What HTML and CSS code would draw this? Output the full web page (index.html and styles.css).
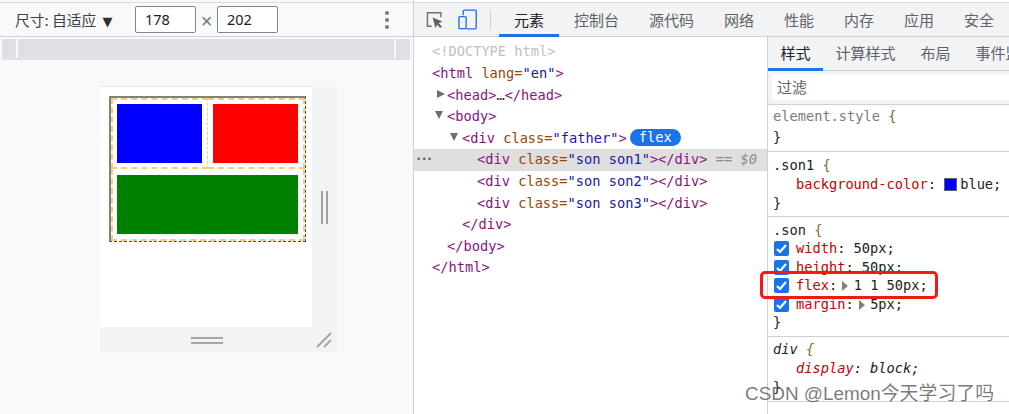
FILE: index.html
```html
<!DOCTYPE html>
<html lang="zh">
<head>
<meta charset="utf-8">
<title>DevTools</title>
<link rel="stylesheet" href="styles.css">
</head>
<body>
<div class="app">
  <section class="left">
    <div class="dev-toolbar">
      <span class="dim-label">尺寸: 自适应<span class="caret">▼</span></span>
      <span class="dim-input first">178</span>
      <span class="times">×</span>
      <span class="dim-input">202</span>
      <span class="kebab"><i></i><i></i><i></i></span>
    </div>
    <div class="ruler"><i></i><i></i></div>
    <div class="stage">
      <div class="device-wrap">
        <div class="device-row">
          <div class="device">
            <div class="father">
              <div class="cell c1"><div class="son blue"></div></div>
              <div class="cell c2"><div class="son red"></div></div>
              <div class="cell c3"><div class="son green"></div></div>
            </div>
          </div>
          <div class="handle-side"><i></i><i></i></div>
        </div>
        <div class="handle-bottom">
          <div class="grip"><i></i><i></i></div>
          <svg class="corner" width="16" height="16" viewBox="0 0 16 16"><path d="M1 15L15 1M8 15L15 8" stroke="#a3a3a3" stroke-width="1.8" fill="none"/></svg>
        </div>
      </div>
    </div>
  </section>

  <section class="right">
    <div class="main-tabs">
      <svg class="ic-inspect" width="18" height="18" viewBox="0 0 18 18"><path d="M6 15.5H1.5V1.5H15.5V6" stroke="#6e7276" stroke-width="1.5" fill="none"/><path d="M7 6.5L17 10.5L13.2 12.4L16.6 15.8L15 17.4L11.6 14L9.8 17.5Z" fill="#5f6368"/></svg>
      <svg class="ic-device" width="20" height="21" viewBox="0 0 20 21"><path d="M5.5 6V2a1.3 1.3 0 0 1 1.3-1.3h10.9A1.3 1.3 0 0 1 19 2v17a1.3 1.3 0 0 1-1.3 1.3H9" stroke="#1a73e8" stroke-width="1.4" fill="none"/><rect x="1" y="7.5" width="7.5" height="12.6" rx="1" stroke="#1a73e8" stroke-width="1.4" fill="none"/></svg>
      <span class="sep"></span>
      <span class="tab active">元素</span>
      <span class="tab">控制台</span>
      <span class="tab">源代码</span>
      <span class="tab">网络</span>
      <span class="tab">性能</span>
      <span class="tab">内存</span>
      <span class="tab">应用</span>
      <span class="tab">安全</span>
    </div>
    <div class="panes">
      <div class="dom">
        <div class="line doctype">&lt;!DOCTYPE html&gt;</div>
        <div class="line"><span class="t">&lt;html</span> <span class="an">lang=</span><span class="av">"en"</span><span class="t">&gt;</span></div>
        <div class="line l1"><i class="tri closed"></i><span class="t">&lt;head&gt;</span>…<span class="t">&lt;/head&gt;</span></div>
        <div class="line l1"><i class="tri open"></i><span class="t">&lt;body&gt;</span></div>
        <div class="line l2"><i class="tri open"></i><span class="t">&lt;div</span> <span class="an">class=</span><span class="av">"father"</span><span class="t">&gt;</span><span class="badge">flex</span></div>
        <div class="line l3 selected"><span class="dots">•••</span><span class="t">&lt;div</span> <span class="an">class=</span><span class="av">"son son1"</span><span class="t">&gt;&lt;/div&gt;</span> <span class="eq">== <em>$0</em></span></div>
        <div class="line l3"><span class="t">&lt;div</span> <span class="an">class=</span><span class="av">"son son2"</span><span class="t">&gt;&lt;/div&gt;</span></div>
        <div class="line l3"><span class="t">&lt;div</span> <span class="an">class=</span><span class="av">"son son3"</span><span class="t">&gt;&lt;/div&gt;</span></div>
        <div class="line l2"><span class="t">&lt;/div&gt;</span></div>
        <div class="line l1"><span class="t">&lt;/body&gt;</span></div>
        <div class="line"><span class="t">&lt;/html&gt;</span></div>
      </div>
      <div class="styles">
        <div class="sub-tabs">
          <span class="sub active">样式</span>
          <span class="sub">计算样式</span>
          <span class="sub">布局</span>
          <span class="sub">事件监听器</span>
        </div>
        <div class="filter-bar"><div class="filter">过滤</div></div>
        <div class="rule r1">
          <div class="sel dim">element.style <span class="br">{</span></div>
          <div class="sel">}</div>
        </div>
        <div class="rule r2">
          <div class="sel">.son1 <span class="br">{</span></div>
          <div class="prop"><span class="pn">background-color</span>: <i class="swatch"></i><span class="pv">blue</span>;</div>
          <div class="sel">}</div>
        </div>
        <div class="rule r3">
          <div class="sel">.son <span class="br">{</span></div>
          <div class="prop chk"><i class="box"><svg width="15" height="15" viewBox="0 0 15 15"><path d="M3 8l3 3 6-7" stroke="#fff" stroke-width="2.2" fill="none"/></svg></i><span class="pn">width</span>: 50px;</div>
          <div class="prop chk"><i class="box"><svg width="15" height="15" viewBox="0 0 15 15"><path d="M3 8l3 3 6-7" stroke="#fff" stroke-width="2.2" fill="none"/></svg></i><span class="pn">height</span>: 50px;</div>
          <div class="prop chk"><i class="box"><svg width="15" height="15" viewBox="0 0 15 15"><path d="M3 8l3 3 6-7" stroke="#fff" stroke-width="2.2" fill="none"/></svg></i><span class="pn">flex</span>:<i class="tri-s"></i>1 1 50px;</div>
          <div class="prop chk"><i class="box"><svg width="15" height="15" viewBox="0 0 15 15"><path d="M3 8l3 3 6-7" stroke="#fff" stroke-width="2.2" fill="none"/></svg></i><span class="pn">margin</span>:<i class="tri-s"></i>5px;</div>
          <div class="sel">}</div>
        </div>
        <div class="rule r4">
          <div class="sel ital">div <span class="br">{</span></div>
          <div class="prop ital"><span class="pn">display</span>: block;</div>
          <div class="sel">}</div>
        </div>
      </div>
    </div>
  </section>
  <div class="annot"></div>
  <div class="watermark">CSDN @Lemon今天学习了吗</div>
</div>
</body>
</html>
```
FILE: styles.css
```css
* { box-sizing: border-box; }
html, body { margin: 0; padding: 0; background: #fff; }
.app {
  position: relative;
  display: flex;
  width: 1009px;
  height: 414px;
  overflow: hidden;
  font-family: "Noto Sans CJK SC", "Noto Sans", sans-serif;
  color: #303942;
}
i { display: block; font-style: normal; }

/* left: device emulation */
.left {
  width: 414px;
  flex: none;
  padding-top: 2px;
  background: #f8f9f9;
  border-right: 1px solid #cfd1d6;
  display: flex;
  flex-direction: column;
}
.dev-toolbar {
  height: 35px;
  flex: none;
  display: flex;
  align-items: center;
  padding-left: 15px;
  border-top: 1px solid #dadce0;
  border-bottom: 1px solid #cfd1d6;
  font-size: 14.8px;
  color: #3c4043;
}
.dim-label { width: 120px; white-space: nowrap; }
.caret { margin-left: 6px; font: 13px "DejaVu Sans", sans-serif; color: #303030; }
.dim-input {
  width: 61px;
  height: 27px;
  padding-left: 9px;
  background: #fff;
  border: 1px solid #80868b;
  border-radius: 2px;
  font: 14.5px/25px "Noto Sans", sans-serif;
  color: #202124;
}
.times { width: 21px; text-align: center; color: #66798f; font: 20px/27px "Liberation Sans", sans-serif; padding-top: 3px; }
.kebab { margin-left: 108px; display: flex; flex-direction: column; gap: 3px; }
.kebab i { width: 4px; height: 4px; background: #77797d; border-radius: 50%; margin-left: -1px; }
.ruler {
  margin: 2px 3px 0 2px;
  height: 21px;
  flex: none;
  background: #dee0e5;
  padding: 0 14px 0 14px;
  display: flex;
  justify-content: space-between;
}
.ruler i { width: 2px; height: 19px; background: #f8f9f9; }
.stage { flex: 1; padding: 27px 0 0 100px; }
.device-wrap { width: 237px; }
.device-row { display: flex; height: 240px; }
.device {
  width: 212px;
  background: #fff;
  padding: 9px;
  box-shadow: 0 -1px 0 #e3e4e7;
}
.father {
  width: 196.5px;
  height: 146px;
  border-top: 2px solid #808080;
  border-left: 2px solid #808080;
  border-right: 1px dashed #4a4a4a;
  border-bottom: 1px dashed #4a4a4a;
  display: flex;
  flex-wrap: wrap;
  align-content: flex-start;
}
.cell { border: 2px dashed #f6cd7b; }
.c1 { width: 97px; height: 71px; border-right-width: 1.5px; padding: 4px 0 0 4px; }
.c2 { width: 96.5px; height: 71px; border-left: 0; padding: 4px 0 0 4.5px; }
.c3 { width: 193.5px; height: 72px; border-top: 0; padding: 6px 0 0 4px; }
.son { height: 59px; }
.blue { width: 84.7px; background: #0000ff; }
.red { width: 85px; background: #ff0000; }
.green { width: 181px; background: #008000; }
.handle-side {
  width: 25px;
  margin-top: 0;
  background: #f1f3f4;
  padding: 104px 0 0 9px;
  display: flex;
  gap: 2.5px;
}
.handle-side i { width: 2.2px; height: 33px; background: #a3a3a3; }
.handle-bottom {
  height: 25px;
  background: #f1f3f4;
  display: flex;
  justify-content: space-between;
  padding: 9.5px 5px 0 91px;
}
.grip { width: 32px; display: flex; flex-direction: column; gap: 3px; }
.grip i { height: 2px; background: #a7a7a7; }
.corner { margin-top: -4.5px; }

/* right: devtools */
.right { flex: 1; min-width: 0; display: flex; flex-direction: column; padding-top: 2px; }
.main-tabs {
  height: 35px;
  flex: none;
  display: flex;
  align-items: center;
  background: #f1f3f4;
  border-top: 1px solid #dadce0;
  border-bottom: 1px solid #cfd1d6;
  padding-left: 12px;
  font-size: 15px;
  color: #5f6368;
  white-space: nowrap;
}
.ic-device { margin-left: 15px; }
.sep { width: 1px; height: 20px; background: #cdcfd3; margin: 0 7.5px 0 13px; }
.tab { padding: 0 15px; height: 34px; line-height: 33px; flex: none; }
.tab.active { color: #202124; border-bottom: 3px solid #1a73e8; }
.panes { flex: 1; min-height: 0; display: flex; font-family: "DejaVu Sans Mono", monospace; font-size: 13.68px; }
.dom { width: 353px; flex: none; padding-top: 4.4px; }
.line { position: relative; height: 21.6px; line-height: 21.6px; padding-left: 18px; white-space: pre; color: #303942; }
.l1 { padding-left: 33px; }
.l2 { padding-left: 48px; }
.l3 { padding-left: 63px; }
.doctype { color: #c0c0c0; }
.t { color: #881280; }
.an { color: #994500; }
.av { color: #1a1aa6; }
.tri { position: absolute; top: 7px; margin-left: -11px; width: 0; height: 0; }
.tri.closed { border-left: 8px solid #6e6e6e; border-top: 4.5px solid transparent; border-bottom: 4.5px solid transparent; margin-left: -10px; top: 5px; }
.tri.open { border-top: 8px solid #6e6e6e; border-left: 4.5px solid transparent; border-right: 4.5px solid transparent; top: 5px; margin-left: -12px; }
.badge {
  display: inline-block;
  height: 17px;
  width: 51px;
  margin-left: 3px;
  border-radius: 9px;
  background: #1a73e8;
  color: #fff;
  text-align: center;
  line-height: 16px;
  vertical-align: 1px;
  font-size: 13.68px;
}
.selected { background: #dfdfdf; }
.dots { position: absolute; left: 2px; top: 0; font-size: 9px; color: #5f6368; letter-spacing: 0; }
.eq { color: #8b8b8b; }
.eq em { font-style: italic; }

.styles { flex: 1; min-width: 0; border-left: 1px solid #cfd1d6; overflow: hidden; }
.sub-tabs {
  height: 34px;
  display: flex;
  background: #f1f3f4;
  border-bottom: 1px solid #cfd1d6;
  font: 15px "Noto Sans CJK SC", sans-serif;
  color: #5f6368;
  white-space: nowrap;
}
.sub { padding: 0 12.5px; line-height: 32px; height: 34px; flex: none; }
.sub.active { color: #202124; border-bottom: 3px solid #1a73e8; }
.filter-bar { height: 34px; padding: 4px 0 4px 4px; background: #f1f3f4; border-bottom: 1px solid #cfd1d6; }
.filter { height: 25px; background: #fff; padding-left: 5px; font: 15px/24px "Noto Sans CJK SC", sans-serif; color: #5f6368; }
.rule { border-bottom: 1px solid #cfd1d6; padding-left: 5px; white-space: nowrap; color: #222; }
.r1 { height: 47px; padding-top: 1px; }
.r1 .sel { line-height: 21px; }
.r2 { height: 65px; padding-top: 4px; }
.r2 .sel, .r2 .prop { line-height: 19px; }
.r3 { height: 120px; padding-top: 4px; }
.r3 .sel, .r3 .prop { line-height: 18.4px; }
.r4 { height: 65px; padding-top: 3px; }
.r4 .sel, .r4 .prop { line-height: 19px; }
.dim { color: #7b7b7b; }
.br { color: #8a6a1f; }
.ital { font-style: italic; }
.prop { position: relative; padding-left: 23px; }
.pn { color: #c80000; }
.pv { color: #222; }
.swatch { display: inline-block; width: 13px; height: 13px; background: #0000ff; border: 1px solid #5f6368; vertical-align: -2px; margin-right: 3px; }
.box { position: absolute; left: 1px; top: 2px; width: 15px; height: 15px; background: #1a73e8; border-radius: 2px; }
.box svg { display: block; }
.tri-s { display: inline-block; width: 0; height: 0; border-left: 6.5px solid #808080; border-top: 5px solid transparent; border-bottom: 5px solid transparent; margin: 0 5.5px 0 5px; vertical-align: -1px; }

/* annotations over the screenshot */
.annot {
  position: absolute;
  left: 760px;
  top: 271px;
  width: 178px;
  height: 28px;
  border: 3px solid #f21a14;
  border-radius: 5px;
}
.watermark {
  position: absolute;
  left: 745px;
  top: 382px;
  font: 18.9px/24px "Liberation Sans", "Noto Sans CJK SC", sans-serif;
  color: rgba(70, 70, 70, .72);
  white-space: nowrap;
}
```
